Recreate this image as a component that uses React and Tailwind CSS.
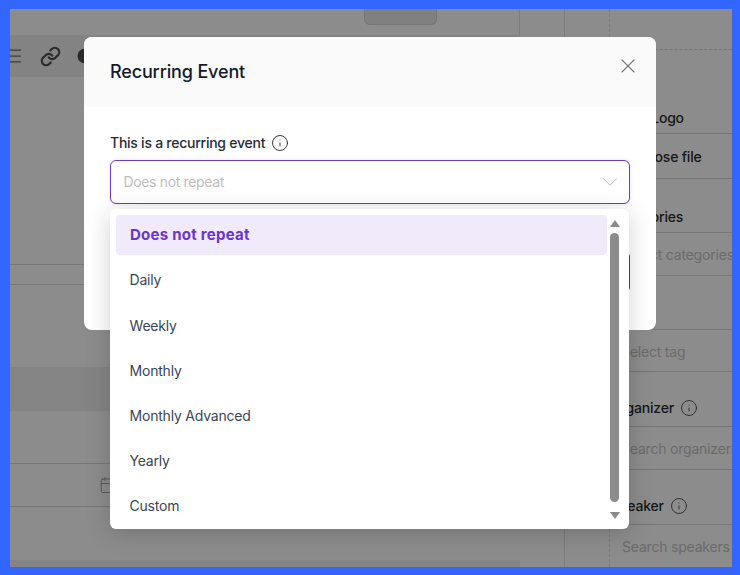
import React from 'react';
import { X, ChevronDown, Info, Link, List, Calendar, Moon } from 'lucide-react';

const options = ['Daily', 'Weekly', 'Monthly', 'Monthly Advanced', 'Yearly', 'Custom'];

function Label({ children, info }) {
    return (
        <div className="flex items-center gap-[6px] text-sm font-medium text-[#161616] whitespace-nowrap">
            {children}
            {info && <Info size={18} strokeWidth={1.25} className="text-[#2e2e2e]" />}
        </div>
    );
}

function Field({ children, height, pad }) {
    return (
        <div className={`${height} ${pad} flex items-center pt-[2px] text-sm text-[#6b6b6b] whitespace-nowrap border-b border-[#777777]`}>
            {children}
        </div>
    );
}

function Sidebar() {
    return (
        <div className="w-[122px] shrink-0 overflow-hidden tracking-[-0.2px]">
            <div className="h-[41px] border-b border-dashed border-[#777777]"></div>
            <div className="h-[84px] flex items-end pb-[5px] pl-[1px] border-b border-[#777777]">
                <Label>Event Logo</Label>
            </div>
            <div className="h-[45px] flex items-center pt-[2px] pl-[18px] text-sm font-medium text-[#161616] border-b border-[#777777] whitespace-nowrap">
                Choose file
            </div>
            <div className="h-[54px] flex items-end pb-[5px] pl-[2px] border-b border-[#777777]">
                <Label>Categories</Label>
            </div>
            <Field height="h-[43px]" pad="pl-[12px]">Select categories</Field>
            <div className="h-[54px] border-b border-[#777777]"></div>
            <Field height="h-[42px]" pad="pl-[11px]">Select tag</Field>
            <div className="h-[55px] flex items-end pb-[8px] border-b border-[#777777]">
                <Label info>Organizer</Label>
            </div>
            <Field height="h-[43px]" pad="pl-[11px]">Search organizers</Field>
            <div className="h-[55px] flex items-end pb-[8px] border-b border-[#777777]">
                <Label info>Speaker</Label>
            </div>
            <div className="h-[42px] flex items-center pt-[2px] pl-[12px] text-sm text-[#6b6b6b] whitespace-nowrap">Search speakers</div>
        </div>
    );
}

function MainColumn() {
    return (
        <div className="w-[510px] shrink-0 flex flex-col overflow-hidden">
            <div className="h-[26px] flex justify-end pr-[82px] border-r border-[#7c7c7c]">
                <div className="w-[73px] h-[16px] bg-[#808080] border border-t-0 border-[#767676] rounded-b-md"></div>
            </div>
            <div className="h-[42px] bg-[#838383] flex items-center shrink-0">
                <List size={20} strokeWidth={1.5} className="-ml-[7px] text-[#3c3c3c]" />
                <Link size={21} strokeWidth={2.5} className="ml-[17px] text-[#2a2a2a]" />
                <Moon size={18} fill="#2a2a2a" className="ml-[15px] text-[#2a2a2a]" />
            </div>
            <div className="h-[188px] shrink-0 border-b border-[#777777]"></div>
            <div className="h-[20px] shrink-0 border-b border-[#777777]"></div>
            <div className="h-[82px] shrink-0"></div>
            <div className="h-[44px] shrink-0 bg-[#848484]"></div>
            <div className="h-[53px] shrink-0 border-b border-[#777777]"></div>
            <div className="h-[43px] shrink-0 border-b border-[#777777] flex items-center pl-[89px]">
                <Calendar size={18} strokeWidth={1.25} className="text-[#555555]" />
            </div>
            <div className="h-[53px] shrink-0"></div>
            <div className="h-[7px] shrink-0 bg-[#858585]"></div>
        </div>
    );
}

function Dropdown() {
    return (
        <div className="absolute left-0 top-[49px] w-[519px] h-[320px] bg-white rounded-md shadow-[0_4px_24px_rgba(0,0,0,0.18)] flex pl-[6px] pt-[6px] z-10">
            <div className="w-[491px]">
                <div className="h-[40px] flex items-center pl-[14px] bg-[#f1eafb] rounded text-[15px] font-bold tracking-[0.25px] text-[#6a35c9]">
                    Does not repeat
                </div>
                <div className="flex flex-col pt-[2.9px]">
                    {options.map(opt => (
                        <div key={opt} className="h-[45.15px] flex items-center pl-[13.5px] text-sm tracking-[-0.2px] text-[#3a4557]">{opt}</div>
                    ))}
                </div>
            </div>
            <div className="ml-[3px] w-[9px] flex flex-col items-center">
                <div className="mt-[5px] mb-[6px] w-0 h-0 border-x-[5px] border-x-transparent border-b-[7px] border-b-[#8a8a8a]"></div>
                <div className="w-[9px] h-[269px] shrink-0 bg-[#8c8c8c] rounded-full"></div>
                <div className="mt-[10px] w-0 h-0 border-x-[5px] border-x-transparent border-t-[7px] border-t-[#8a8a8a]"></div>
            </div>
        </div>
    );
}

function Modal() {
    return (
        <div className="absolute left-[74px] top-[28px] w-[572px] h-[293px] bg-white rounded-lg">
            <div className="h-[70px] bg-[#fafafa] rounded-t-lg flex items-center justify-between pl-[26px] pr-[16px]">
                <h2 className="text-lg font-medium tracking-[-0.15px] text-[#141b2b]">Recurring Event</h2>
                <X size={24} strokeWidth={1.1} className="text-[#777777] -mt-[12px]" />
            </div>
            <div className="px-[26px] pt-[27px]">
                <div className="flex items-center gap-[6px] text-sm font-medium text-[#262b36] h-[18px] tracking-[-0.25px]">
                    This is a recurring event
                    <Info size={18} strokeWidth={1.25} className="text-[#2e2e2e]" />
                </div>
                <div className="relative mt-[8px]">
                    <div className="w-[520px] h-[44px] border border-[#6d3bc0] rounded-md flex items-center justify-between pl-[12.5px] pr-[6px] text-sm tracking-[-0.35px] text-[#bdbdbd] shadow-[0_0_4px_rgba(109,59,192,0.15)]">
                        Does not repeat
                        <ChevronDown size={26} strokeWidth={0.9} className="text-[#b5b5b5]" />
                    </div>
                    <Dropdown />
                    <div className="absolute right-0 top-[93px] w-[8px] h-[38px] border-r-2 border-[#5a28b4] rounded-r"></div>
                </div>
            </div>
        </div>
    );
}

export default function App() {
    return (
        <div className="h-[575px] w-[740px] border-t-[9px] border-l-[10px] border-r-[8px] border-b-[8px] border-[#3366ff] overflow-hidden font-['Inter',sans-serif]">
            <div className="relative h-full w-full bg-[#8c8c8c] flex overflow-hidden">
                <MainColumn />
                <div className="w-[45px] shrink-0 border-r border-[#7c7c7c]"></div>
                <div className="w-[45px] shrink-0 border-r border-dashed border-[#7c7c7c]"></div>
                <Sidebar />
                <Modal />
            </div>
        </div>
    );
}
